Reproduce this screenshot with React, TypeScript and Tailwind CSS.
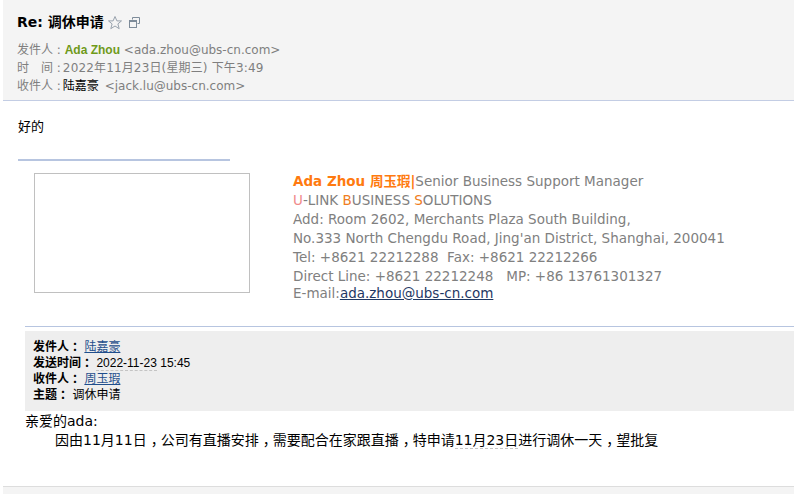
const font = "font-['DejaVu_Sans','Noto_Sans_CJK_SC',sans-serif]";

function Meta({ label, children }: { label: string; children: React.ReactNode }) {
  return (
    <div className="flex h-[18px] items-center whitespace-pre text-[12px] leading-[18px] text-[#7f7f7f]">
      <span>{label}</span>
      {children}
    </div>
  );
}

function Sig({ children, className = "" }: { children: React.ReactNode; className?: string }) {
  return <div className={`h-[19px] whitespace-pre leading-[19px] ${className}`}>{children}</div>;
}

function Quoted({ label, children }: { label: string; children: React.ReactNode }) {
  return (
    <div className="h-4 whitespace-pre leading-4">
      <b className="font-bold">
        {label}
        <span className="relative left-[3px]">：</span>
      </b>{" "}
      {children}
    </div>
  );
}

// The reference's comma sits in the middle of its cell, the font's at the left edge.
function Comma({ before }: { before: string }) {
  return (
    <>
      <span className="tracking-[4px]">{before}</span>
      <span className="tracking-[-4px]">，</span>
    </>
  );
}

export default function App() {
  return (
    <div className={`h-[494px] w-[794px] overflow-hidden bg-white text-black ${font}`}>
      <header className="ml-[3px] h-[101px] border-b border-[#c3cde4] bg-[#f4f4f4] pl-[14px] pt-[13px]">
        <div className="flex h-[19px] items-center text-[14px] font-bold leading-[19px] text-black">
          <span>Re: 调休申请</span>
          <svg className="ml-[3px]" width="16" height="16" viewBox="0 0 16 16" fill="none" stroke="#98a2ad" strokeWidth="1">
            <path d="M8 1.5l1.9 4.4h4.6l-3.6 3 1.3 4.8L8 11l-4.2 2.7 1.3-4.8-3.6-3h4.6z" />
          </svg>
          <svg className="ml-[5px]" width="13" height="13" viewBox="0 0 13 13" fill="none" stroke="#7d8b99" strokeWidth="1">
            <path d="M4.5 3.5V1.5h7v6h-2" />
            <rect x="1.5" y="4.5" width="7" height="7" />
            <path d="M1.5 5.5h7" />
          </svg>
        </div>
        <div className="mt-[9px]">
          <Meta label="发件人 : ">
            <b className="font-['Liberation_Sans',sans-serif] font-bold text-[#6f9a1a]">Ada Zhou</b>
            <span> &lt;ada.zhou@ubs-cn.com&gt;</span>
          </Meta>
          <Meta label="时　间 :">
            <span className="ml-[2px] tracking-[0.15px]">2022年11月23日(星期三) 下午3:49</span>
          </Meta>
          <Meta label="收件人 :">
            <span className="ml-[2px] text-black">陆嘉豪</span>
            <span className="ml-[2px]"> &lt;jack.lu@ubs-cn.com&gt;</span>
          </Meta>
        </div>
      </header>

      <main className="relative h-[385px]">
        <p className="pl-[18px] pt-[17px] text-[13px] leading-[18px]">好的</p>
        <div className="ml-[18px] mt-[23px] h-[2px] w-[212px] bg-[#b7c5e0]" />

        <section className="mt-[12px] flex pl-[34px]">
          <div className="h-[120px] w-[216px] border border-[#c0c0c0]" />
          <div className="-mt-px ml-[43px] text-[13.5px] text-[#808080]">
            <Sig>
              <b className="font-bold text-[#ff7a0f]">Ada Zhou 周玉瑕|</b>
              <span>Senior Business Support Manager</span>
            </Sig>
            <Sig>
              <span className="text-[#f08a8a]">U</span>-LINK <span className="text-[#ef7d22]">B</span>USINESS{" "}
              <span className="text-[#ef7d22]">S</span>OLUTIONS
            </Sig>
            <Sig>Add: Room 2602, Merchants Plaza South Building,</Sig>
            <Sig>No.333 North Chengdu Road, Jing'an District, Shanghai, 200041</Sig>
            <Sig>Tel: +8621 22212288  Fax: +8621 22212266</Sig>
            <Sig>Direct Line: +8621 22212248   MP: +86 13761301327</Sig>
            <div className="-mt-[2px] h-[19px] whitespace-pre leading-[19px]">
              E-mail:<a className="text-[#1f3864] underline">ada.zhou@ubs-cn.com</a>
            </div>
          </div>
        </section>

        <div className="ml-[25px] mt-[23px] h-px bg-[#b7c5e0]" />
        <section className="ml-[25px] mt-[4px] h-[80px] bg-[#eeeeee] pl-[8px] pt-[8px] font-['Liberation_Sans','Noto_Sans_CJK_SC',sans-serif] text-[12px]">
          <Quoted label="发件人">
            <a className="text-[#1f4e8c] underline">陆嘉豪</a>
          </Quoted>
          <Quoted label="发送时间">
            <span className="border-b border-dashed border-[#c4c4c4]">2022-11-23</span> 15:45
          </Quoted>
          <Quoted label="收件人">
            <a className="text-[#1f4e8c] underline">周玉瑕</a>
          </Quoted>
          <Quoted label="主题">调休申请</Quoted>
        </section>
        <div className="ml-[25px] pt-px text-[14px] leading-[19px]">
          <div className="h-[19px]">亲爱的ada:</div>
          <div className="h-[19px] whitespace-pre pl-[30px]">
            因由11月11<Comma before="日" />公司有直播安<Comma before="排" />需要配合在家跟直<Comma before="播" />特申请<span className="border-b border-dashed border-[#c4c4c4]">11月23日</span>进行调休一<Comma before="天" />望批复
          </div>
        </div>
      </main>

      <footer className="ml-[3px] h-2 border-t border-[#dddddd] bg-[#f4f4f4]" />
    </div>
  );
}
